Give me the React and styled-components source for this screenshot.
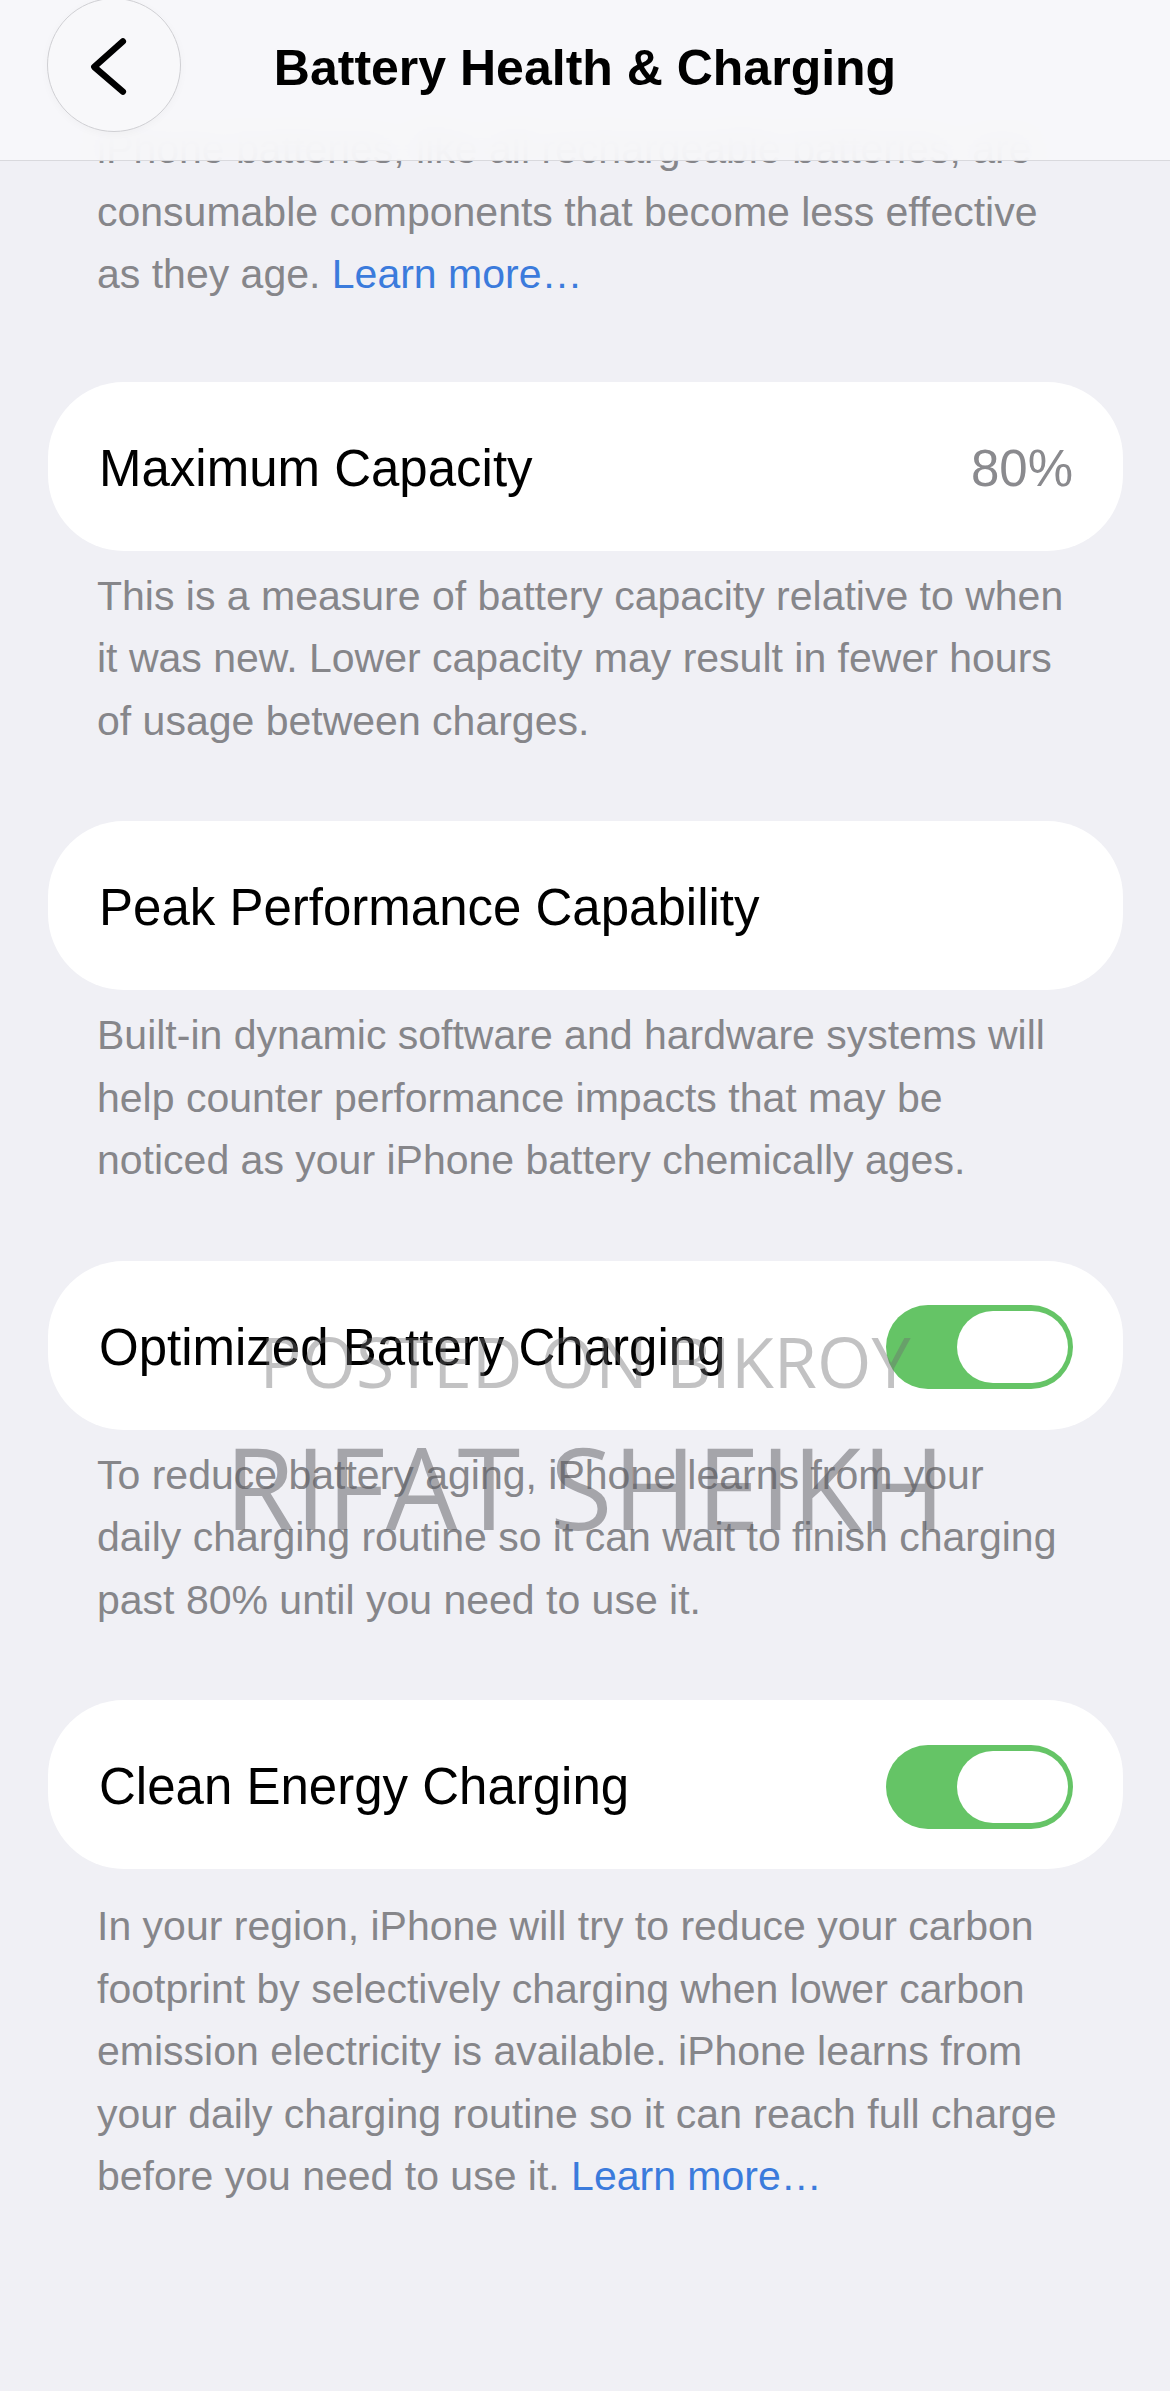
import React from 'react';
import styled, { createGlobalStyle } from 'styled-components';

const GlobalStyle = createGlobalStyle`
  html, body {
    margin: 0;
    padding: 0;
    background: #f0f0f5;
  }
  body {
    font-family: "Liberation Sans", Arial, sans-serif;
    -webkit-font-smoothing: antialiased;
  }
`;

const Screen = styled.div`
  position: relative;
  width: 1170px;
  min-height: 2391px;
  background: #f0f0f5;
  overflow: hidden;
`;

const NavBar = styled.header`
  position: absolute;
  top: 0;
  left: 0;
  right: 0;
  z-index: 3;
  height: 161px;
  box-sizing: border-box;
  padding: 0 47px;
  display: grid;
  grid-template-columns: 134px 1fr 134px;
  align-items: start;
  background: rgba(248, 248, 250, 0.93);
  -webkit-backdrop-filter: blur(14px);
  backdrop-filter: blur(14px);
  border-bottom: 1px solid #d9d9dd;
`;

const BackButton = styled.button`
  width: 134px;
  height: 134px;
  margin-top: -2px;
  padding: 0;
  box-sizing: border-box;
  border-radius: 50%;
  border: 1.5px solid #cfcfd3;
  background: #f8f8fa;
  box-shadow: 0 2px 8px rgba(0, 0, 0, 0.03);
  display: flex;
  align-items: center;
  justify-content: center;

  svg {
    width: 100%;
    height: 100%;
  }
`;

const Title = styled.h1`
  margin: 43px 0 0;
  font-size: 50px;
  line-height: 50px;
  font-weight: 700;
  color: #000;
  text-align: center;
  white-space: nowrap;
`;

const Content = styled.main`
  padding: 118px 47px 0 48px;
`;

const Section = styled.section`
  margin-bottom: 69px;
`;

const Card = styled.div`
  height: 169px;
  box-sizing: border-box;
  padding: 4px 50px 0 51px;
  border-radius: 76px;
  background: #fff;
  display: flex;
  align-items: center;
  justify-content: space-between;
`;

const Label = styled.span`
  font-size: 51px;
  color: #000;
  white-space: nowrap;
`;

const Value = styled.span`
  font-size: 51px;
  color: #8a8a8e;
`;

const Switch = styled.div`
  width: 187px;
  height: 84px;
  box-sizing: border-box;
  padding: 6px 5px;
  border-radius: 42px;
  background: ${(props) => (props.on ? '#65c466' : '#e5e5ea')};
  display: flex;
  justify-content: ${(props) => (props.on ? 'flex-end' : 'flex-start')};
`;

const Knob = styled.div`
  width: 111px;
  height: 72px;
  border-radius: 36px;
  background: #fff;
`;

const Footnote = styled.p`
  margin: ${(props) => (props.intro ? '0 0 76px' : '0')};
  padding: ${(props) => props.gap || 0}px 0 0 49px;
  font-size: 41px;
  line-height: 62.5px;
  color: #86868a;
  white-space: nowrap;
`;

const Link = styled.span`
  color: #3b7bdc;
`;

// watermark stamped over the screenshot
const Watermark = styled.div`
  position: absolute;
  left: 0;
  right: 0;
  top: ${(props) => props.top}px;
  z-index: 2;
  pointer-events: none;
  text-align: center;
  font-family: "Open Sans", "Liberation Sans", sans-serif;
  font-weight: 400;
  line-height: 1;
  font-size: ${(props) => props.size}px;
  color: ${(props) => props.color};
  white-space: nowrap;
`;

const lines = (list) => list.map((line, i) => (
  <React.Fragment key={i}>
    {i > 0 && <br />}
    {line}
  </React.Fragment>
));

const sections = [
  {
    label: 'Maximum Capacity',
    value: '80%',
    note: [
      'This is a measure of battery capacity relative to when',
      'it was new. Lower capacity may result in fewer hours',
      'of usage between charges.',
    ],
  },
  {
    label: 'Peak Performance Capability',
    note: [
      'Built-in dynamic software and hardware systems will',
      'help counter performance impacts that may be',
      'noticed as your iPhone battery chemically ages.',
    ],
  },
  {
    label: 'Optimized Battery Charging',
    toggle: true,
    note: [
      'To reduce battery aging, iPhone learns from your',
      'daily charging routine so it can wait to finish charging',
      'past 80% until you need to use it.',
    ],
  },
  {
    label: 'Clean Energy Charging',
    toggle: true,
    gap: 26,
    note: [
      'In your region, iPhone will try to reduce your carbon',
      'footprint by selectively charging when lower carbon',
      'emission electricity is available. iPhone learns from',
      'your daily charging routine so it can reach full charge',
    ],
    last: 'before you need to use it. ',
  },
];

const Chevron = () => (
  <svg viewBox="0 0 134 134">
    <polyline
      points="76,43 47,69 76,94"
      fill="none"
      stroke="#000"
      strokeWidth="6.5"
      strokeLinecap="round"
      strokeLinejoin="round"
    />
  </svg>
);

export default function App() {
  return (
    <Screen>
      <GlobalStyle />
      <NavBar>
        <BackButton type="button" aria-label="Back">
          <Chevron />
        </BackButton>
        <Title>Battery Health &amp; Charging</Title>
        <div />
      </NavBar>

      <Content>
        <Footnote intro>
          {lines([
            'iPhone batteries, like all rechargeable batteries, are',
            'consumable components that become less effective',
          ])}
          <br />
          as they age. <Link>Learn more…</Link>
        </Footnote>

        {sections.map((s) => (
          <Section key={s.label}>
            <Card>
              <Label>{s.label}</Label>
              {s.value && <Value>{s.value}</Value>}
              {s.toggle && (
                <Switch on>
                  <Knob />
                </Switch>
              )}
            </Card>
            <Footnote gap={s.gap || 14}>
              {lines(s.note)}
              {s.last && (
                <>
                  <br />
                  {s.last}
                  <Link>Learn more…</Link>
                </>
              )}
            </Footnote>
          </Section>
        ))}
      </Content>

      <Watermark top={1326} size={70} color="rgba(110, 110, 112, 0.42)">POSTED ON BIKROY</Watermark>
      <Watermark top={1429} size={114} color="rgba(90, 90, 95, 0.5)">RIFAT SHEIKH</Watermark>
    </Screen>
  );
}
